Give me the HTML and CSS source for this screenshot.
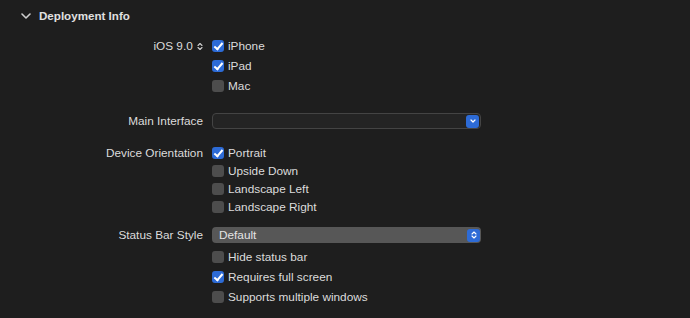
FILE: index.html
```html
<!DOCTYPE html>
<html>
  <head>
    <meta charset="utf-8">
    <title>Deployment Info</title>
    <link rel="stylesheet" href="styles.css">
  </head>
  <body>
    <header class="section-head">
      <svg class="disclosure" width="10" height="6" viewBox="0 0 10 6">
        <path d="M1 1 L5 5 L9 1" fill="none" stroke="#cfcfcf" stroke-width="1.6" stroke-linecap="round" stroke-linejoin="round"/>
      </svg>
      <span>Deployment Info</span>
    </header>

    <div class="group group-targets">
      <div class="row">
        <div class="label">iOS 9.0
          <svg class="stepper" width="6" height="9" viewBox="0 0 6 9">
            <path d="M1 3.5 L3 1.5 L5 3.5 M1 5.5 L3 7.5 L5 5.5" fill="none" stroke="#cfcfcf" stroke-width="1.1" stroke-linecap="round" stroke-linejoin="round"/>
          </svg>
        </div>
        <label class="check"><span class="box on"></span>iPhone</label>
      </div>
      <div class="row">
        <div class="label"></div>
        <label class="check"><span class="box on"></span>iPad</label>
      </div>
      <div class="row">
        <div class="label"></div>
        <label class="check"><span class="box"></span>Mac</label>
      </div>
    </div>

    <div class="group group-interface">
      <div class="row">
        <div class="label">Main Interface</div>
        <div class="popup popup-empty">
          <span class="popup-value"></span>
          <span class="popup-arrow">
            <svg width="6" height="4" viewBox="0 0 6 4"><path d="M1 1 L3 3 L5 1" fill="none" stroke="#fff" stroke-width="1.2" stroke-linecap="round" stroke-linejoin="round"/></svg>
          </span>
        </div>
      </div>
    </div>

    <div class="group group-orientation">
      <div class="row">
        <div class="label">Device Orientation</div>
        <label class="check"><span class="box on"></span>Portrait</label>
      </div>
      <div class="row">
        <div class="label"></div>
        <label class="check"><span class="box"></span>Upside Down</label>
      </div>
      <div class="row">
        <div class="label"></div>
        <label class="check"><span class="box"></span>Landscape Left</label>
      </div>
      <div class="row">
        <div class="label"></div>
        <label class="check"><span class="box"></span>Landscape Right</label>
      </div>
    </div>

    <div class="group group-status">
      <div class="row row-popup">
        <div class="label">Status Bar Style</div>
        <div class="popup popup-filled">
          <span class="popup-value">Default</span>
          <span class="popup-arrow">
            <svg width="6" height="8" viewBox="0 0 6 8"><path d="M1 3 L3 1 L5 3 M1 5 L3 7 L5 5" fill="none" stroke="#fff" stroke-width="1.1" stroke-linecap="round" stroke-linejoin="round"/></svg>
          </span>
        </div>
      </div>
      <div class="row">
        <div class="label"></div>
        <label class="check"><span class="box"></span>Hide status bar</label>
      </div>
      <div class="row">
        <div class="label"></div>
        <label class="check"><span class="box on"></span>Requires full screen</label>
      </div>
      <div class="row">
        <div class="label"></div>
        <label class="check"><span class="box"></span>Supports multiple windows</label>
      </div>
    </div>
  </body>
</html>
```

FILE: styles.css
```css
* {
  box-sizing: border-box;
}

body {
  margin: 0;
  padding: 0;
  background-color: #1e1e1e;
  font-family: 'Liberation Sans', Arial, sans-serif;
  font-size: 11.8px;
  color: #dcdcdc;
  height: 318px;
  overflow: hidden;
}

.section-head {
  display: flex;
  align-items: center;
  height: 31px;
  padding-left: 21px;
  font-weight: bold;
  font-size: 11.6px;
  color: #e0e0e0;
}

.section-head .disclosure {
  margin-right: 8px;
}

.row {
  display: grid;
  grid-template-columns: 203px 1fr;
  column-gap: 9px;
  align-items: center;
  height: 20px;
}

.label {
  text-align: right;
  white-space: nowrap;
}

.stepper {
  margin-left: 1px;
  vertical-align: -1px;
}

.group-targets {
  margin-top: 5px;
}

.group-interface {
  margin-top: 15px;
}

.group-orientation {
  margin-top: 13px;
}

.group-orientation .row {
  height: 18px;
}

.group-status {
  margin-top: 8px;
}

.group-status .row-popup {
  height: 22px;
  margin-bottom: 1px;
}

.check {
  display: flex;
  align-items: center;
  white-space: nowrap;
}

.box {
  width: 12px;
  height: 12px;
  border-radius: 3px;
  background-color: #4d4d4d;
  margin-right: 4px;
  position: relative;
}

.box.on {
  background-color: #2d6bd6;
}

.box.on:after {
  content: '';
  position: absolute;
  left: 4px;
  top: 1px;
  width: 3px;
  height: 7px;
  border-right: 2px solid #fff;
  border-bottom: 2px solid #fff;
  transform: rotate(40deg);
}

.popup {
  display: flex;
  align-items: center;
  width: 269px;
  height: 16px;
  border-radius: 4px;
  padding: 0 1px 0 7px;
}

.popup-empty {
  border: 1px solid #444;
  background-color: #242424;
}

.popup-filled {
  background-color: #575757;
  color: #e4e4e4;
}

.popup-value {
  flex: 1;
}

.popup-arrow {
  display: flex;
  align-items: center;
  justify-content: center;
  width: 13px;
  height: 13px;
  border-radius: 3px;
  background-color: #2d6bd6;
}
```
